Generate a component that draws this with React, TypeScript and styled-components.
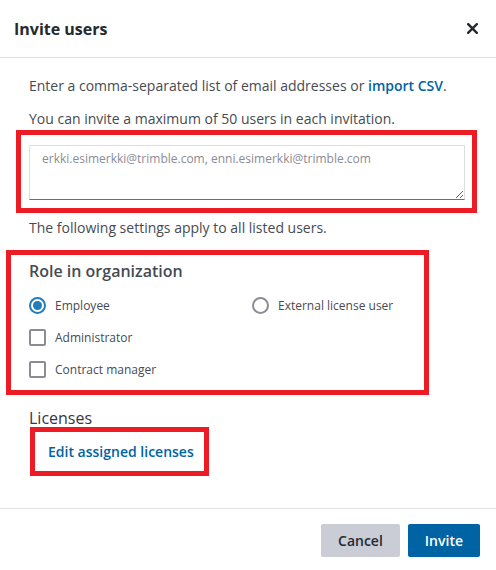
import styled, { createGlobalStyle } from "styled-components";

const GlobalStyle = createGlobalStyle`
  html, body {
    margin: 0;
    padding: 0;
    background: #ffffff;
  }
  body {
    font-family: "Open Sans", "Noto Sans", sans-serif;
    color: #464b52;
  }
  * {
    box-sizing: border-box;
  }
`;

const Dialog = styled.div`
  width: 496px;
  height: 570px;
  display: flex;
  flex-direction: column;
  background: #ffffff;
`;

const Header = styled.div`
  height: 58px;
  display: flex;
  align-items: center;
  justify-content: space-between;
  padding: 0 18px 0 14px;
  border-bottom: 1px solid #e0e1e9;
`;

const Title = styled.h1`
  margin: 0;
  font-size: 16px;
  font-weight: 700;
  color: #252a2e;
`;

const CloseButton = styled.button`
  border: 0;
  background: transparent;
  padding: 0;
  width: 12px;
  height: 12px;
  display: flex;
  align-items: center;
  justify-content: center;
  cursor: pointer;
`;

const Body = styled.div`
  flex: 1;
  padding: 18px 31px 0 29px;
`;

const Text = styled.p<{ $top?: number }>`
  margin: ${(p) => p.$top ?? 0}px 0 0;
  font-size: 14px;
  line-height: 20px;
  color: #464b52;
`;

const Link = styled.a`
  color: #0063a3;
  font-weight: 600;
  font-size: 14px;
  text-decoration: none;
  cursor: pointer;
`;

const Highlight = styled.div<{ $margin: string; $padding: string; $inline?: boolean }>`
  display: ${(p) => (p.$inline ? "inline-block" : "block")};
  border: 5px solid #ed1c24;
  margin: ${(p) => p.$margin};
  padding: ${(p) => p.$padding};
`;

const EmailInput = styled.textarea`
  display: block;
  width: 436px;
  height: 55px;
  resize: vertical;
  border: 1px solid #dcdde6;
  border-bottom-color: #6a6e79;
  border-radius: 0;
  padding: 4px 12px;
  font-family: "Open Sans", "Noto Sans", sans-serif;
  font-size: 12px;
  line-height: 18px;
  color: #252a2e;
  outline: none;
  &::placeholder {
    color: #8c8b96;
  }
`;

const SectionTitle = styled.h2`
  margin: 0;
  font-size: 16px;
  line-height: 24px;
  font-weight: 600;
  color: #464b52;
`;

const SubTitle = styled.h3`
  margin: 11px 0 0;
  font-size: 16px;
  line-height: 24px;
  font-weight: 500;
  color: #363545;
`;

const OptionGrid = styled.div`
  display: grid;
  grid-template-columns: 223px 1fr;
  row-gap: 8px;
  margin-top: 10px;
`;

const Option = styled.label`
  display: flex;
  align-items: center;
  gap: 9px;
  height: 24px;
  font-size: 12px;
  color: #464b52;
  cursor: pointer;
`;

const RadioMark = styled.span<{ $checked?: boolean }>`
  width: 17px;
  height: 17px;
  border-radius: 50%;
  border: 2px solid ${(p) => (p.$checked ? "#217cbb" : "#8c8b96")};
  display: flex;
  align-items: center;
  justify-content: center;
  flex-shrink: 0;
  &::after {
    content: "";
    width: 9px;
    height: 9px;
    border-radius: 50%;
    background: ${(p) => (p.$checked ? "#217cbb" : "transparent")};
  }
`;

const CheckMark = styled.span`
  width: 17px;
  height: 17px;
  border: 2px solid #8c8b96;
  border-radius: 2px;
  flex-shrink: 0;
`;

const LicenseLink = styled.a`
  display: block;
  color: #0063a3;
  font-size: 14px;
  font-weight: 600;
  line-height: 20px;
  text-decoration: none;
  cursor: pointer;
`;

const Footer = styled.div`
  height: 62px;
  border-top: 1px solid #e0e1e9;
  display: flex;
  justify-content: flex-end;
  align-items: flex-start;
  gap: 8px;
  padding: 15px 16px 0;
`;

const Button = styled.button<{ $primary?: boolean }>`
  height: 33px;
  padding: 0 17px;
  border: 0;
  border-radius: 2px;
  font-family: "Open Sans", "Noto Sans", sans-serif;
  font-size: 14px;
  font-weight: 600;
  background: ${(p) => (p.$primary ? "#0063a3" : "#cbcdd6")};
  color: ${(p) => (p.$primary ? "#ffffff" : "#252a2e")};
  cursor: pointer;
`;

const App = () => {
  return (
    <>
      <GlobalStyle />
      <Dialog>
        <Header>
          <Title>Invite users</Title>
          <CloseButton aria-label="Close">
            <svg width="11" height="11" viewBox="0 0 11 11">
              <path
                d="M1.2 1.2 L9.8 9.8 M9.8 1.2 L1.2 9.8"
                stroke="#252a2e"
                strokeWidth="2.4"
                strokeLinecap="square"
              />
            </svg>
          </CloseButton>
        </Header>
        <Body>
          <Text>
            Enter a comma-separated list of email addresses or{" "}
            <Link>import CSV</Link>.
          </Text>
          <Text $top={13}>You can invite a maximum of 50 users in each invitation.</Text>
          <Highlight $margin="1px -12px 0 -13px" $padding="10px 7px 8px 8px">
            <EmailInput placeholder="erkki.esimerkki@trimble.com, enni.esimerkki@trimble.com" />
          </Highlight>
          <Text $top={5}>The following settings apply to all listed users.</Text>
          <Highlight $margin="12px 36px 0 -23px" $padding="4px 0 9px 18px">
            <SectionTitle>Role in organization</SectionTitle>
            <OptionGrid>
              <Option>
                <RadioMark $checked />
                Employee
              </Option>
              <Option>
                <RadioMark />
                External license user
              </Option>
              <Option>
                <CheckMark />
                Administrator
              </Option>
              <span />
              <Option>
                <CheckMark />
                Contract manager
              </Option>
            </OptionGrid>
          </Highlight>
          <SubTitle>Licenses</SubTitle>
          <Highlight $inline $margin="-3px 0 0 1px" $padding="10px 10px 9px 13px">
            <LicenseLink>Edit assigned licenses</LicenseLink>
          </Highlight>
        </Body>
        <Footer>
          <Button>Cancel</Button>
          <Button $primary>Invite</Button>
        </Footer>
      </Dialog>
    </>
  );
};

export default App;
